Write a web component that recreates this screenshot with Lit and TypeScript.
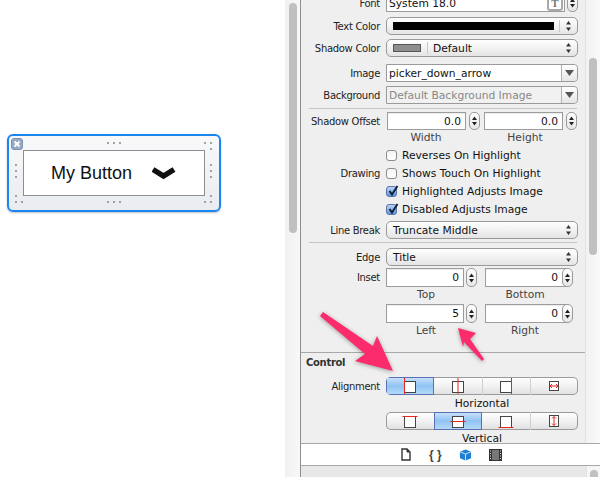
import { LitElement, css, html, svg } from 'lit'
import { customElement } from 'lit/decorators.js'

const handleDots = [
  [108, 143], [114, 143], [120, 143], [205, 143], [211, 143], [211, 149],
  [16, 165], [16, 171], [16, 177], [211, 165], [211, 171], [211, 177],
  [16, 196], [16, 202], [22, 202], [108, 202], [114, 202], [120, 202],
  [205, 202], [211, 202], [211, 196],
]

const stepper = html`<span class="stepper"><svg width="9" height="16" viewBox="0 0 9 16"><path d="M4.5 3.5 7 7H2zM4.5 12.5 7 9H2z" fill="#222"/></svg></span>`
const popArrows = html`<svg class="arrows" width="7" height="12" viewBox="0 0 7 12"><path d="M3.5 1 6 4.6H1zM3.5 11 6 7.4H1z" fill="#333"/></svg>`
const comboBtn = html`<span class="combo-btn"><svg width="9" height="6" viewBox="0 0 9 6"><path d="M0 0h9L4.5 6z" fill="#555"/></svg></span>`

@customElement('app-root')
export class AppRoot extends LitElement {
  static styles = css`
    :host {
      display: flex;
      position: relative;
      width: 600px;
      height: 477px;
      overflow: hidden;
      background: #fff;
      font-family: "DejaVu Sans", sans-serif;
      font-size: 10.7px;
      color: #222;
    }
    .canvas {
      width: 285px;
      flex: none;
      box-sizing: border-box;
      padding: 134px 0 0 7px;
    }
    .selection {
      position: relative;
      box-sizing: border-box;
      width: 214px;
      height: 78px;
      padding: 14px;
      border: 2px solid #1a86f2;
      border-radius: 6px;
      background: linear-gradient(#f9f9fa, #e9ecf0);
      box-shadow: 0 1px 2px rgba(0,0,0,.25);
    }
    .my-button {
      display: flex;
      align-items: center;
      gap: 20px;
      box-sizing: border-box;
      height: 46px;
      padding-left: 27px;
      border: 1px solid #8e8e8e;
      background: #fff;
      color: #111;
      font: 18px "Liberation Sans", sans-serif;
    }
    .close {
      position: absolute;
      left: 2px;
      top: 2px;
      width: 12px;
      height: 12px;
    }
    .dots {
      position: absolute;
      left: -9px;
      top: -136px;
    }
    .left-track {
      width: 15px;
      flex: none;
      box-sizing: border-box;
      padding: 3px 3px 0 4px;
      background: linear-gradient(90deg, #f1f1f1, #f8f8f8);
    }
    .thumb {
      background: #c0c0c0;
      width: 8px;
      border-radius: 4px;
    }
    .left-thumb { height: 230px; }
    .inspector {
      flex: 1;
      display: flex;
      flex-direction: column;
      min-width: 0;
      border-left: 1px solid #8e8e8e;
      background: #e8e8e8;
    }
    .body {
      display: flex;
      height: 443px;
      flex: none;
      overflow: hidden;
    }
    .panel {
      width: 285px;
      flex: none;
      box-sizing: border-box;
      background: #efefef;
      border-right: 1px solid #e2e2e2;
      display: flex;
      flex-direction: column;
      margin-top: -6px;
    }
    .right-track {
      flex: 1;
      box-sizing: border-box;
      padding: 58px 0 0 3px;
      background: linear-gradient(90deg, #f2f2f2, #f9f9f9);
    }
    .right-thumb { height: 197px; }
    .row {
      display: grid;
      grid-template-columns: 79px 192px;
      column-gap: 6px;
      align-items: center;
      height: 18px;
      flex: none;
    }
    .row > .lab {
      text-align: right;
      white-space: nowrap;
      font-size: 10px;
      letter-spacing: -.3px;
    }
    .m2 { margin-top: 2px; }
    .m3 { margin-top: 3px; }
    .m4 { margin-top: 4px; }
    .m5 { margin-top: 5px; }
    .m6 { margin-top: 6px; }
    .m7 { margin-top: 7px; }
    .tall { height: 19px; }
    .sep {
      height: 1px;
      flex: none;
      margin: 3px 8px 0;
      background: #c4c4c4;
    }
    .sep.first { margin-top: 4px; }
    .sep.full {
      margin: 15px 0 0;
      background: #a8a8a8;
    }
    .field {
      box-sizing: border-box;
      height: 100%;
      border: 1px solid #9c9c9c;
      background: #fff;
      color: #111;
      display: flex;
      align-items: center;
      justify-content: flex-end;
      padding: 0 4px 0 2px;
      min-width: 0;
      box-shadow: inset 0 1px 1px rgba(0,0,0,.08);
    }
    .field.start { justify-content: flex-start; }
    .stepper {
      box-sizing: border-box;
      height: 100%;
      width: 11px;
      border: 1px solid #9a9a9a;
      border-radius: 5px;
      background: linear-gradient(#fff, #e6e6e6);
      display: flex;
      align-items: center;
      justify-content: center;
    }
    .stepper svg { flex: none; }
    .font-ctl {
      display: grid;
      grid-template-columns: 179px 11px;
      column-gap: 2px;
      height: 100%;
    }
    .font-field { padding: 0 1px 0 2px; }
    .t-btn {
      box-sizing: border-box;
      width: 16px;
      height: 15px;
      margin: 1px 0 0 auto;
      border: 2px solid #a8a8a8;
      border-radius: 3px;
      color: #777;
      font: bold 11px/11px "Liberation Serif", serif;
      text-align: center;
    }
    .popup {
      box-sizing: border-box;
      height: 100%;
      display: flex;
      align-items: center;
      padding-left: 6px;
      border: 1px solid #9a9a9a;
      border-radius: 5px;
      background: linear-gradient(#fff, #f2f2f2 50%, #e4e4e4);
      color: #111;
      position: relative;
    }
    .arrows {
      position: absolute;
      right: 5px;
      top: 2px;
    }
    .pop-div {
      width: 1px;
      height: 12px;
      background: #c8c8c8;
      flex: none;
    }
    .black {
      width: 161px;
      height: 8px;
      background: #000;
      margin-right: 5px;
      flex: none;
    }
    .grey {
      box-sizing: border-box;
      width: 28px;
      height: 8px;
      background: #8e8e8e;
      border: 1px solid #555;
      margin-right: 6px;
      flex: none;
    }
    .default { margin-left: 5px; }
    .combo {
      box-sizing: border-box;
      height: 100%;
      display: flex;
      align-items: center;
      border: 1px solid #9a9a9a;
      border-radius: 0 4px 4px 0;
      padding-left: 2px;
      background: #fff;
      color: #111;
    }
    .combo span:first-child { flex: 1; }
    .combo.disabled {
      background: #f1f1f1;
      color: #888;
    }
    .combo-btn {
      width: 15px;
      height: 100%;
      flex: none;
      display: flex;
      align-items: center;
      justify-content: center;
      border-left: 1px solid #b0b0b0;
      background: linear-gradient(#fff, #e6e6e6);
      border-radius: 0 4px 4px 0;
    }
    .pair-offset, .pair-inset {
      display: grid;
      height: 100%;
    }
    .pair-offset { grid-template-columns: 79px 11px 80px 11px; column-gap: 3px; margin-left: 1px; }
    .pair-offset .stepper + .field { margin-left: 1px; }
    .pair-inset { grid-template-columns: 78px 11px 81px 11px; column-gap: 2px; }
    .pair-inset .stepper + .field { margin-left: 6px; padding-right: 7px; }
    .pair-inset > .field:nth-child(3) { margin-right: -1px; width: 81px; }
    .caps {
      display: grid;
      grid-template-columns: 80px 118px;
      margin-left: 85px;
      height: 14px;
      flex: none;
      align-items: center;
      color: #444;
      text-align: center;
    }
    .gap2 { height: 2px; flex: none; }
    .check {
      display: flex;
      align-items: center;
      gap: 5px;
      color: #111;
    }
    .box {
      box-sizing: border-box;
      width: 11px;
      height: 11px;
      border: 1px solid #8c8c8c;
      border-radius: 3px;
      background: linear-gradient(#f4f4f4, #fff);
      position: relative;
      flex: none;
    }
    .box.on {
      background: linear-gradient(#bcd4f4, #5f95de);
      border-color: #5a75a8;
    }
    .box svg {
      position: absolute;
      left: 0;
      top: -4px;
    }
    .control-title {
      height: 14px;
      flex: none;
      margin: 3px 0 0 5px;
      font-size: 10px;
      letter-spacing: -.3px;
      font-weight: bold;
      line-height: 14px;
      color: #333;
    }
    .seg {
      box-sizing: border-box;
      height: 100%;
      display: grid;
      grid-template-columns: repeat(4, 48px);
      border-radius: 5px;
      overflow: hidden;
      box-shadow: inset 0 0 0 1px #9a9a9a;
      background: linear-gradient(#fff, #f2f2f2 50%, #dfdfdf);
    }
    .seg > span {
      display: flex;
      align-items: center;
      justify-content: center;
      height: 18px;
    }
    .seg > span.on {
      background: linear-gradient(#cfe4fa, #8fc3f3 50%, #b9dcf9);
      box-shadow: inset 0 0 0 1px #5a70b4;
    }
    .seg > span.tick { box-shadow: inset 1px 0 0 #d0d0d0; }
    .under {
      height: 14px;
      margin: 2px 0 1px 85px;
      width: 192px;
      flex: none;
      text-align: center;
      line-height: 14px;
      color: #111;
    }
    .toolbar {
      box-sizing: border-box;
      height: 23px;
      flex: none;
      background: #fff;
      border-top: 1px solid #a8a8a8;
      border-bottom: 1px solid #a8a8a8;
      display: flex;
      align-items: center;
      padding-left: 100px;
      gap: 18px;
    }
    .braces {
      font: bold 12px "Liberation Sans", sans-serif;
      width: 12px;
      color: #444;
      white-space: nowrap;
      text-align: center;
    }
    .film { margin-left: -1px; }
    .foot {
      flex: 1;
      display: flex;
      overflow: hidden;
    }
    .foot-main {
      width: 285px;
      flex: none;
      border-right: 1px solid #e2e2e2;
    }
    .foot-track {
      flex: 1;
      padding: 4px 0 0 3px;
      background: #f6f6f6;
    }
    .foot-thumb { height: 30px; }
    .arrows-overlay {
      position: absolute;
      left: 0;
      top: 0;
      pointer-events: none;
      filter: drop-shadow(0 1px 2px rgba(0,0,0,.35));
    }
  `

  // square with a red guide, used in the alignment segments
  alignIcon(kind: string) {
    const lines: Record<string, string> = {
      left: 'M3.5 1v16', hcenter: 'M9 1v16', right: 'M14.5 1v16',
      top: 'M1.5 4.5h15', vcenter: 'M1.5 9.5h15', bottom: 'M1.5 15.5h15',
    }
    return html`<svg width="18" height="18" viewBox="0 0 18 18">
      <rect x="3.5" y="4.5" width="11" height="11" fill="#fff" stroke="#444"/>
      <path d=${lines[kind]} stroke="#e8251c" stroke-width="1" fill="none"/>
    </svg>`
  }

  fillIcon(vertical: boolean) {
    return vertical
      ? html`<svg width="10" height="12" viewBox="0 0 10 12"><rect x=".5" y=".5" width="9" height="11" fill="#fff" stroke="#444"/><path d="M5 1.5v9M3 3.5l2-2 2 2M3 8.5l2 2 2-2" stroke="#e8251c" fill="none"/></svg>`
      : html`<svg width="10" height="10" viewBox="0 0 10 10"><rect x=".5" y=".5" width="9" height="9" fill="#fff" stroke="#444"/><path d="M1 5h8M3 3 1 5l2 2M7 3l2 2-2 2" stroke="#e8251c" fill="none"/></svg>`
  }

  renderCheck(label: string, on: boolean, rowLabel = '') {
    return html`<div class="row">
      <span class="lab">${rowLabel}</span>
      <span class="check">
        <span class="box ${on ? 'on' : ''}">
          ${on ? html`<svg width="13" height="14" viewBox="0 0 13 14"><path d="M2.5 8 5 11.5 10.5 3" stroke="#14213d" stroke-width="2" fill="none"/></svg>` : ''}
        </span>
        ${label}
      </span>
    </div>`
  }

  render() {
    return html`
      <div class="canvas">
        <div class="selection">
          <div class="my-button">
            <span>My Button</span>
            <svg width="24" height="14" viewBox="0 0 24 14"><path d="M1 3.5 11.5 10 22 3.5" stroke="#111" stroke-width="5.5" fill="none"/></svg>
          </div>
          <svg class="close" viewBox="0 0 12 12">
            <rect x=".5" y=".5" width="11" height="11" rx="2.5" fill="#93a9c6" stroke="#7f93ad"/>
            <path d="M3.5 3.5l5 5M8.5 3.5l-5 5" stroke="#fff" stroke-width="2"/>
          </svg>
          <svg class="dots" width="230" height="220">
            ${handleDots.map(([x, y]) => svg`<circle cx=${x} cy=${y} r="1.1" fill="#8b8f94"/>`)}
          </svg>
        </div>
      </div>
      <div class="left-track"><div class="thumb left-thumb"></div></div>
      <div class="inspector">
        <div class="body">
          <div class="panel">
            <div class="row">
              <span class="lab">Font</span>
              <div class="font-ctl">
                <div class="field start font-field"><span>System 18.0</span><span class="t-btn">T</span></div>
                ${stepper}
              </div>
            </div>
            <div class="row m5">
              <span class="lab">Text Color</span>
              <div class="popup"><span class="black"></span><span class="pop-div"></span>${popArrows}</div>
            </div>
            <div class="row m4">
              <span class="lab">Shadow Color</span>
              <div class="popup"><span class="grey"></span><span class="pop-div"></span><span class="default">Default</span>${popArrows}</div>
            </div>
            <div class="row m7">
              <span class="lab">Image</span>
              <div class="combo"><span>picker_down_arrow</span>${comboBtn}</div>
            </div>
            <div class="row m4">
              <span class="lab">Background</span>
              <div class="combo disabled"><span>Default Background Image</span>${comboBtn}</div>
            </div>
            <div class="sep first"></div>
            <div class="row m3">
              <span class="lab">Shadow Offset</span>
              <div class="pair-offset">
                <span class="field">0.0</span>${stepper}
                <span class="field">0.0</span>${stepper}
              </div>
            </div>
            <div class="caps"><span>Width</span><span>Height</span></div>
            <div class="gap2"></div>
            ${this.renderCheck('Reverses On Highlight', false)}
            ${this.renderCheck('Shows Touch On Highlight', false, 'Drawing')}
            ${this.renderCheck('Highlighted Adjusts Image', true)}
            ${this.renderCheck('Disabled Adjusts Image', true)}
            <div class="row m3">
              <span class="lab">Line Break</span>
              <div class="popup">Truncate Middle${popArrows}</div>
            </div>
            <div class="sep"></div>
            <div class="row m5">
              <span class="lab">Edge</span>
              <div class="popup">Title${popArrows}</div>
            </div>
            <div class="row tall m2">
              <span class="lab">Inset</span>
              <div class="pair-inset">
                <span class="field">0</span>${stepper}
                <span class="field">0</span>${stepper}
              </div>
            </div>
            <div class="caps"><span>Top</span><span>Bottom</span></div>
            <div class="row tall m3">
              <span class="lab"></span>
              <div class="pair-inset">
                <span class="field">5</span>${stepper}
                <span class="field">0</span>${stepper}
              </div>
            </div>
            <div class="caps"><span>Left</span><span>Right</span></div>
            <div class="sep full"></div>
            <div class="control-title">Control</div>
            <div class="row m7">
              <span class="lab">Alignment</span>
              <div class="seg">
                <span class="on">${this.alignIcon('left')}</span>
                <span>${this.alignIcon('hcenter')}</span>
                <span class="tick">${this.alignIcon('right')}</span>
                <span class="tick">${this.fillIcon(false)}</span>
              </div>
            </div>
            <div class="under">Horizontal</div>
            <div class="row">
              <span class="lab"></span>
              <div class="seg">
                <span>${this.alignIcon('top')}</span>
                <span class="on">${this.alignIcon('vcenter')}</span>
                <span>${this.alignIcon('bottom')}</span>
                <span class="tick">${this.fillIcon(true)}</span>
              </div>
            </div>
            <div class="under">Vertical</div>
          </div>
          <div class="right-track"><div class="thumb right-thumb"></div></div>
        </div>
        <div class="toolbar">
          <svg width="10" height="13" viewBox="0 0 10 13"><path d="M1 1h5l3 3v8H1z" fill="#fff" stroke="#333" stroke-width="1.4"/><path d="M6 1v3h3" fill="#333" stroke="#333"/></svg>
          <span class="braces">{ }</span>
          <svg width="13" height="14" viewBox="0 0 14 14"><path d="M7 1l6 2.5v7L7 13 1 10.5v-7z" fill="#1f7fd0"/><path d="M1 3.5 7 6l6-2.5M7 6v7" stroke="#d6ecfb" fill="none"/></svg>
          <svg class="film" width="13" height="12" viewBox="0 0 13 12"><rect width="13" height="12" fill="#333"/><rect x="3" y="1" width="7" height="10" fill="#777"/><path d="M1 2h1M1 4.5h1M1 7h1M1 9.5h1M11 2h1M11 4.5h1M11 7h1M11 9.5h1" stroke="#ddd"/></svg>
        </div>
        <div class="foot">
          <div class="foot-main"></div>
          <div class="foot-track"><div class="thumb foot-thumb"></div></div>
        </div>
      </div>
      <svg class="arrows-overlay" width="600" height="477">
        <path d="M323 312 373 346 377 336 393 371 355 361 365 354 320 316z" fill="#fc2b6c"/>
        <path d="M458 328 476 333 470 339 484 359 482 361 464 342 463 347z" fill="#fc2b6c"/>
      </svg>
    `
  }
}
